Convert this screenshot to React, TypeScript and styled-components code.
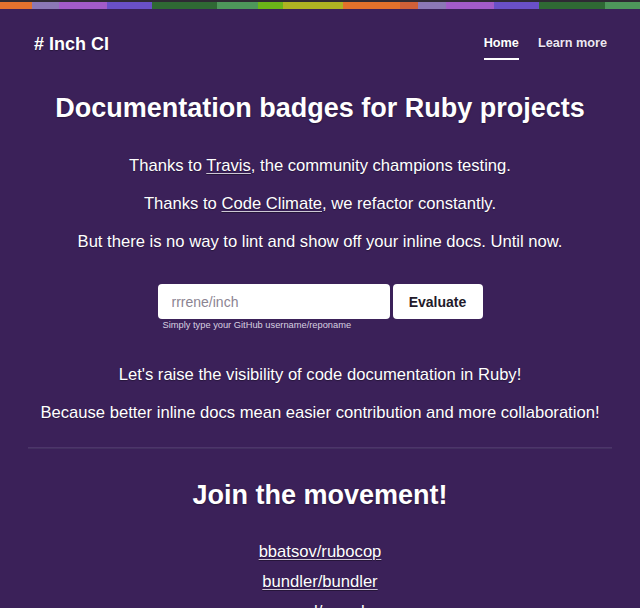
import React from "react";
import styled, { createGlobalStyle } from "styled-components";

const Global = createGlobalStyle`
  html, body { margin: 0; padding: 0; background: #3b2159; }
  body { font-family: "Liberation Sans", Arial, sans-serif; color: #fff; }
  * { box-sizing: border-box; }
`;

const segments: { w: number; c: string }[] = [
  { w: 32, c: "#e4722e" },
  { w: 27, c: "#8b78b6" },
  { w: 48, c: "#a25bc9" },
  { w: 45, c: "#6950c8" },
  { w: 65, c: "#2f6934" },
  { w: 41, c: "#4e975b" },
  { w: 25, c: "#6bb418" },
  { w: 60, c: "#aeb322" },
  { w: 57, c: "#e2712b" },
  { w: 18, c: "#cf6038" },
  { w: 28, c: "#8b78b6" },
  { w: 48, c: "#a25bc9" },
  { w: 45, c: "#6950c8" },
  { w: 66, c: "#2f6934" },
  { w: 35, c: "#4e975b" },
];

const Stripe = styled.div`
  display: flex;
  height: 9px;
  border-top: 2px solid #2e2a33;
`;

const Segment = styled.div<{ $c: string }>`
  background: ${(p) => p.$c};
  height: 100%;
`;

const Header = styled.header`
  display: flex;
  justify-content: space-between;
  align-items: flex-start;
  padding: 24px 33px 0 34px;
`;

const Brand = styled.div`
  font-size: 18px;
  font-weight: bold;
  line-height: 22px;
  text-shadow: 0 1px 1px rgba(0, 0, 0, 0.35);
`;

const Nav = styled.nav`
  display: flex;
  gap: 19px;
  padding-top: 2px;
`;

const NavItem = styled.a<{ $active?: boolean }>`
  font-size: 12.7px;
  font-weight: bold;
  line-height: 16px;
  color: ${(p) => (p.$active ? "#fff" : "#ece6f2")};
  text-decoration: none;
  padding-bottom: 7px;
  border-bottom: 2px solid ${(p) => (p.$active ? "#fff" : "transparent")};
  text-shadow: 0 1px 1px rgba(0, 0, 0, 0.35);
`;

const Main = styled.main`
  display: flex;
  flex-direction: column;
  align-items: center;
  text-align: center;
`;

const Title = styled.h1`
  margin: 32px 0 31px;
  font-size: 27px;
  line-height: 32px;
  font-weight: bold;
  text-shadow: 0 1px 2px rgba(0, 0, 0, 0.35);
`;

const Para = styled.p<{ $mb?: number }>`
  margin: 0 0 ${(p) => p.$mb ?? 16}px;
  font-size: 16.6px;
  line-height: 22px;
  text-shadow: 0 1px 1px rgba(0, 0, 0, 0.35);
`;

const Link = styled.a`
  color: #fff;
  text-decoration: underline;
  text-decoration-color: rgba(255, 255, 255, 0.75);
  text-underline-offset: 2px;
`;

const FormWrap = styled.form`
  display: flex;
  flex-direction: column;
  align-items: flex-start;
  margin: 31px 0 33px;
`;

const Row = styled.div`
  display: flex;
  gap: 3px;
`;

const Input = styled.input`
  width: 232px;
  height: 35px;
  border: none;
  border-radius: 4px;
  background: #fff;
  padding: 0 14px;
  font-family: "Liberation Sans", Arial, sans-serif;
  font-size: 14px;
  color: #333;
  outline: none;
  &::placeholder { color: #8c8492; }
`;

const Button = styled.button`
  width: 90px;
  height: 35px;
  border: none;
  border-radius: 4px;
  background: #fff;
  font-family: "Liberation Sans", Arial, sans-serif;
  font-size: 14px;
  font-weight: bold;
  color: #231a2a;
  cursor: pointer;
`;

const Hint = styled.div`
  padding-left: 5px;
  font-size: 9.3px;
  line-height: 12px;
  color: #d8d0e0;
`;

const Rule = styled.hr`
  width: calc(100% - 56px);
  margin: 23px 28px 0;
  border: none;
  border-top: 1px solid #4d356b;
  border-bottom: 1px solid #433060;
`;

const SubTitle = styled.h2`
  margin: 30px 0 30px;
  font-size: 27px;
  line-height: 32px;
  font-weight: bold;
  text-shadow: 0 1px 2px rgba(0, 0, 0, 0.35);
`;

const RepoList = styled.ul`
  list-style: none;
  margin: 0;
  padding: 0;
  display: flex;
  flex-direction: column;
  gap: 8px;
`;

const RepoItem = styled.li`
  font-size: 16.6px;
  line-height: 22px;
  text-shadow: 0 1px 1px rgba(0, 0, 0, 0.35);
`;

export default function App() {
  return (
    <>
      <Global />
      <Stripe>
        {segments.map((s, i) => (
          <Segment key={i} $c={s.c} style={{ width: s.w }} />
        ))}
      </Stripe>
      <Header>
        <Brand># Inch CI</Brand>
        <Nav>
          <NavItem href="#" $active>Home</NavItem>
          <NavItem href="#">Learn more</NavItem>
        </Nav>
      </Header>
      <Main>
        <Title>Documentation badges for Ruby projects</Title>
        <Para>
          Thanks to <Link href="#">Travis</Link>, the community champions testing.
        </Para>
        <Para>
          Thanks to <Link href="#">Code Climate</Link>, we refactor constantly.
        </Para>
        <Para $mb={0}>
          But there is no way to lint and show off your inline docs. Until now.
        </Para>
        <FormWrap onSubmit={(e) => e.preventDefault()}>
          <Row>
            <Input placeholder="rrrene/inch" />
            <Button type="submit">Evaluate</Button>
          </Row>
          <Hint>Simply type your GitHub username/reponame</Hint>
        </FormWrap>
        <Para>Let's raise the visibility of code documentation in Ruby!</Para>
        <Para $mb={0}>
          Because better inline docs mean easier contribution and more collaboration!
        </Para>
        <Rule />
        <SubTitle>Join the movement!</SubTitle>
        <RepoList>
          <RepoItem><Link href="#">bbatsov/rubocop</Link></RepoItem>
          <RepoItem><Link href="#">bundler/bundler</Link></RepoItem>
          <RepoItem><Link href="#">guard/guard</Link></RepoItem>
        </RepoList>
      </Main>
    </>
  );
}
